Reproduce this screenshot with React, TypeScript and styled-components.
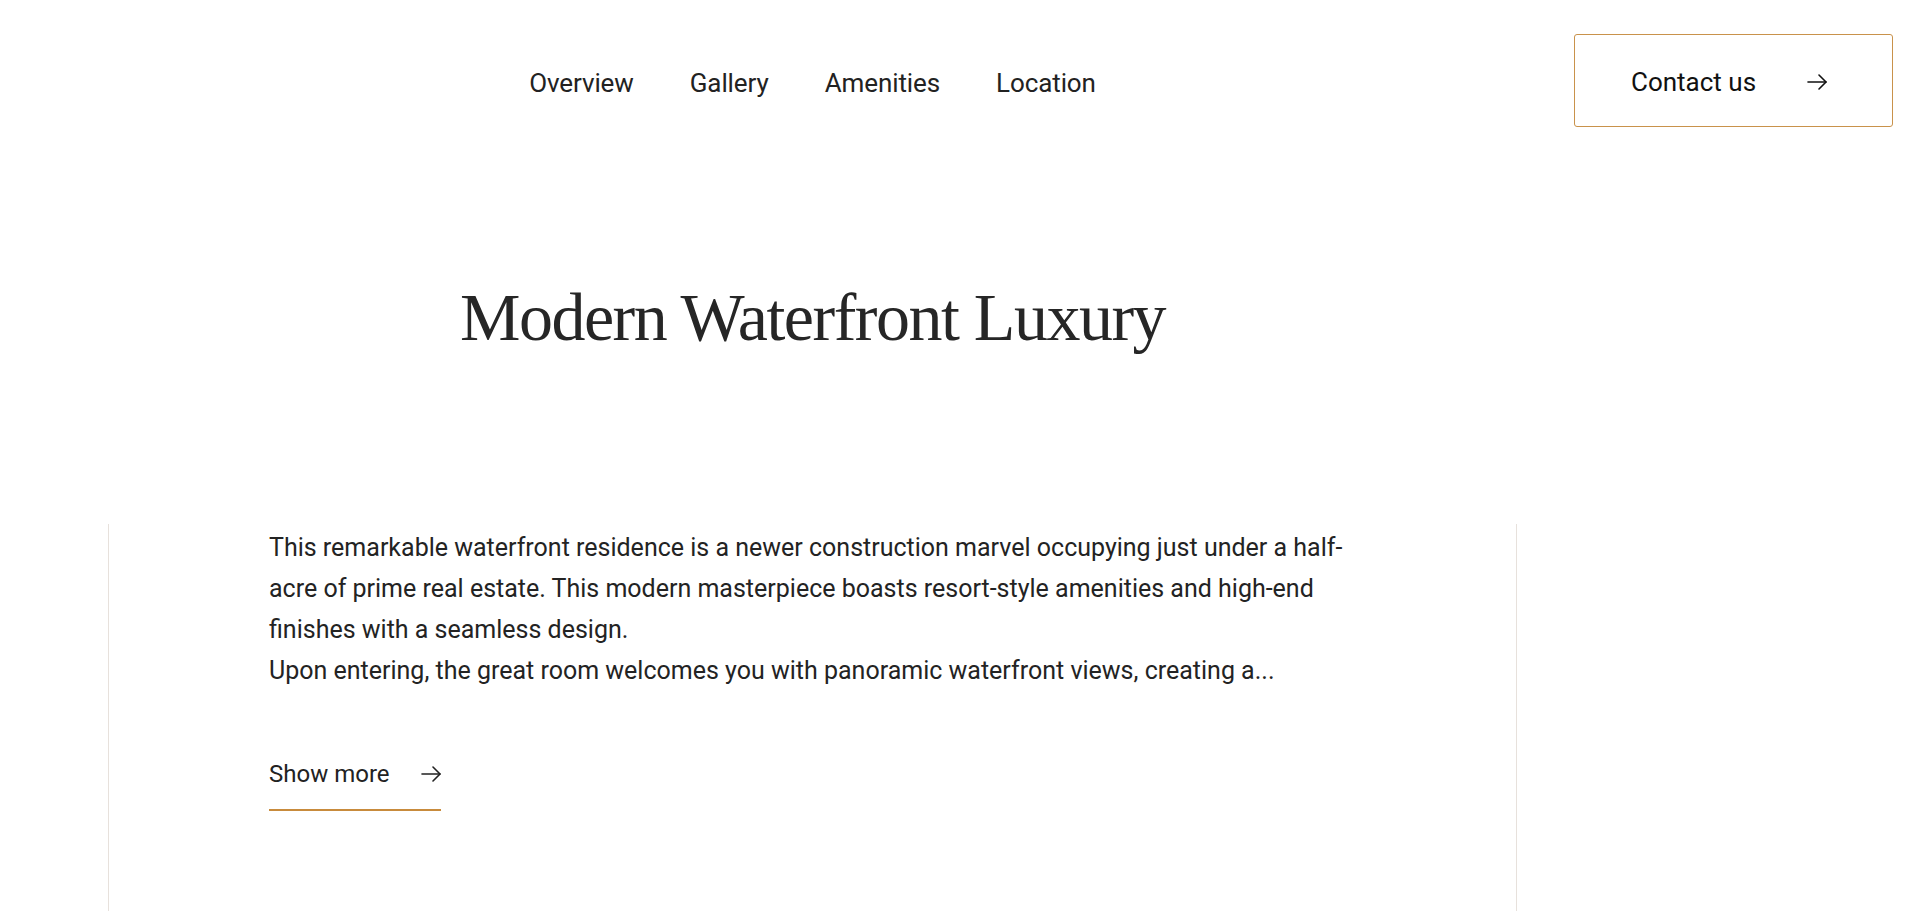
import React from "react";
import styled, { createGlobalStyle } from "styled-components";

const Global = createGlobalStyle`
  html, body { margin: 0; padding: 0; background: #ffffff; }
  body { font-family: Roboto, "Liberation Sans", Arial, sans-serif; color: #222222; }
  * { box-sizing: border-box; }
`;

const Page = styled.div`
  min-height: 911px;
  display: flex;
  flex-direction: column;
`;

const Header = styled.header`
  display: grid;
  grid-template-columns: 108px 1409px 1fr;
  align-items: center;
  padding-top: 34px;
`;

const Nav = styled.nav`
  grid-column: 2;
  display: flex;
  justify-content: center;
  gap: 56px;
  padding-top: 4px;
`;

const NavLink = styled.a`
  font-size: 26px;
  color: #222222;
  text-decoration: none;
  letter-spacing: -0.1px;
  cursor: pointer;
`;

const ContactButton = styled.button`
  grid-column: 3;
  justify-self: end;
  margin-right: 27px;
  width: 319px;
  height: 93px;
  display: flex;
  align-items: center;
  gap: 51px;
  padding: 3px 0 0 56px;
  background: #ffffff;
  border: 1px solid #c9924b;
  border-radius: 3px;
  font-family: inherit;
  font-size: 26px;
  color: #111111;
  cursor: pointer;
`;

const Title = styled.h1`
  margin: 156px 0 0 108px;
  width: 1409px;
  text-align: center;
  font-family: "Liberation Serif", "Times New Roman", serif;
  font-weight: 400;
  font-size: 68px;
  line-height: 1;
  color: #262626;
  letter-spacing: -1.5px;
  white-space: nowrap;
`;

const Section = styled.section`
  flex: 1;
  margin: 173px 0 0 108px;
  width: 1409px;
  border-left: 1px solid #e7e1dc;
  border-right: 1px solid #e7e1dc;
  padding: 3px 0 0 160px;
  display: flex;
  flex-direction: column;
  align-items: flex-start;
`;

const Body = styled.div`
  font-size: 25px;
  line-height: 41px;
  color: #232323;
`;

const Line = styled.div`
  white-space: nowrap;
`;

const ShowMore = styled.a`
  margin-top: 69px;
  display: inline-flex;
  align-items: center;
  gap: 31px;
  padding-bottom: 20px;
  border-bottom: 2px solid #c88b3c;
  font-size: 24px;
  line-height: 1.2;
  color: #222222;
  text-decoration: none;
  cursor: pointer;
`;

const Arrow = ({ size = 20 }: { size?: number }) => (
  <svg width={size} height={(size * 16) / 20} viewBox="0 0 20 16" fill="none" stroke="currentColor" strokeWidth={1.6} strokeLinecap="round" strokeLinejoin="round">
    <path d="M1 8h18" />
    <path d="M12 1l7 7-7 7" />
  </svg>
);

const lines = [
  "This remarkable waterfront residence is a newer construction marvel occupying just under a half-",
  "acre of prime real estate. This modern masterpiece boasts resort-style amenities and high-end",
  "finishes with a seamless design.",
  "Upon entering, the great room welcomes you with panoramic waterfront views, creating a...",
];

export default function App() {
  return (
    <Page>
      <Global />
      <Header>
        <Nav>
          <NavLink>Overview</NavLink>
          <NavLink>Gallery</NavLink>
          <NavLink>Amenities</NavLink>
          <NavLink>Location</NavLink>
        </Nav>
        <ContactButton>
          <span>Contact us</span>
          <Arrow />
        </ContactButton>
      </Header>
      <Title>Modern Waterfront Luxury</Title>
      <Section>
        <Body>
          {lines.map((l) => (
            <Line key={l}>{l}</Line>
          ))}
        </Body>
        <ShowMore>
          <span>Show more</span>
          <Arrow />
        </ShowMore>
      </Section>
    </Page>
  );
}
